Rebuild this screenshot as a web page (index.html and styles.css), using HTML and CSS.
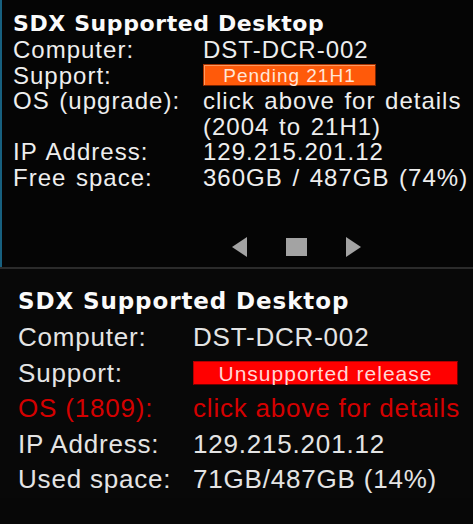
FILE: index.html
```html
<!DOCTYPE html>
<html lang="en">
<head>
<meta charset="utf-8">
<title>SDX Supported Desktop</title>
<link rel="stylesheet" href="styles.css">
</head>
<body>
<section class="panel panel-top">
  <h1 class="title title-top">SDX Supported Desktop</h1>
  <div class="rows rows-top">
    <div class="label">Computer:</div><div class="value">DST-DCR-002</div>
    <div class="label">Support:</div><div class="value"><span class="badge badge-pending">Pending 21H1</span></div>
    <div class="label">OS (upgrade):</div><div class="value">click above for details</div>
    <div class="label"></div><div class="value">(2004 to 21H1)</div>
    <div class="label">IP Address:</div><div class="value">129.215.201.12</div>
    <div class="label">Free space:</div><div class="value">360GB / 487GB (74%)</div>
  </div>
  <nav class="pager">
    <svg class="pager-icon" width="15" height="20" viewBox="0 0 15 20"><polygon points="15,0 15,20 0,10" fill="#a3a3a3"/></svg>
    <svg class="pager-icon" width="21" height="18" viewBox="0 0 21 18"><rect x="0" y="0" width="21" height="18" fill="#a3a3a3"/></svg>
    <svg class="pager-icon" width="15" height="20" viewBox="0 0 15 20"><polygon points="0,0 15,10 0,20" fill="#a3a3a3"/></svg>
  </nav>
</section>
<div class="divider"></div>
<section class="panel panel-bottom">
  <h1 class="title title-bottom">SDX Supported Desktop</h1>
  <div class="rows rows-bottom">
    <div class="label">Computer:</div><div class="value">DST-DCR-002</div>
    <div class="label">Support:</div><div class="value"><span class="badge badge-unsupported">Unsupported release</span></div>
    <div class="label alert">OS (1809):</div><div class="value alert">click above for details</div>
    <div class="label">IP Address:</div><div class="value">129.215.201.12</div>
    <div class="label">Used space:</div><div class="value">71GB/487GB (14%)</div>
  </div>
</section>
</body>
</html>
```
FILE: styles.css
```css
html, body {
  margin: 0;
  padding: 0;
  background: #070707;
}
body {
  width: 473px;
  height: 524px;
  overflow: hidden;
  font-family: "Liberation Sans", Arial, sans-serif;
}
.panel {
  box-sizing: border-box;
}
.panel-top {
  height: 267px;
  padding: 11px 0 0 11px;
  border-left: 2px solid #17607f;
  background: #050505;
}
.divider {
  height: 2px;
  background: #2b2b2b;
}
.panel-bottom {
  padding: 18px 0 0 18px;
  background: #080808;
}
.title {
  margin: 0;
  font-family: "DejaVu Sans", Verdana, sans-serif;
  font-weight: bold;
  color: #fafafa;
}
.title-top {
  font-size: 22px;
  line-height: 26px;
  letter-spacing: 0.6px;
}
.title-bottom {
  font-size: 23px;
  line-height: 28px;
  letter-spacing: 0.9px;
  margin-bottom: 5px;
}
.rows {
  display: grid;
  color: #eeeeee;
}
.rows-top {
  grid-template-columns: 190px auto;
  font-size: 24px;
  line-height: 25.6px;
  letter-spacing: 1px;
  word-spacing: 2px;
}
.rows-bottom {
  grid-template-columns: 175px auto;
  font-size: 26px;
  line-height: 35.5px;
  letter-spacing: 0.8px;
  color: #e4e4e4;
}
.label, .value {
  white-space: nowrap;
}
.value {
  display: flex;
  align-items: center;
}
.alert {
  color: #d40000;
}
.badge {
  display: flex;
  align-items: center;
  justify-content: center;
  box-sizing: border-box;
  word-spacing: 0;
}
.badge-pending {
  width: 173px;
  height: 22px;
  background: #ff5a0a;
  border: 1px solid #a83300;
  border-right-color: #7a2400;
  border-bottom-color: #7a2400;
  box-shadow: inset 1px 1px 0 #ff9a60;
  color: #ffe6d8;
  font-size: 19px;
  letter-spacing: 1px;
}
.badge-unsupported {
  width: 265px;
  height: 24px;
  background: #ff0000;
  border: 1px solid #b00000;
  border-right-color: #6e0000;
  border-bottom-color: #6e0000;
  color: #ffd6d6;
  font-size: 21px;
  letter-spacing: 1px;
}
.pager {
  display: flex;
  align-items: center;
  gap: 39px;
  margin: 46px 0 0 219px;
  height: 20px;
}
.pager-icon {
  display: block;
}
```
